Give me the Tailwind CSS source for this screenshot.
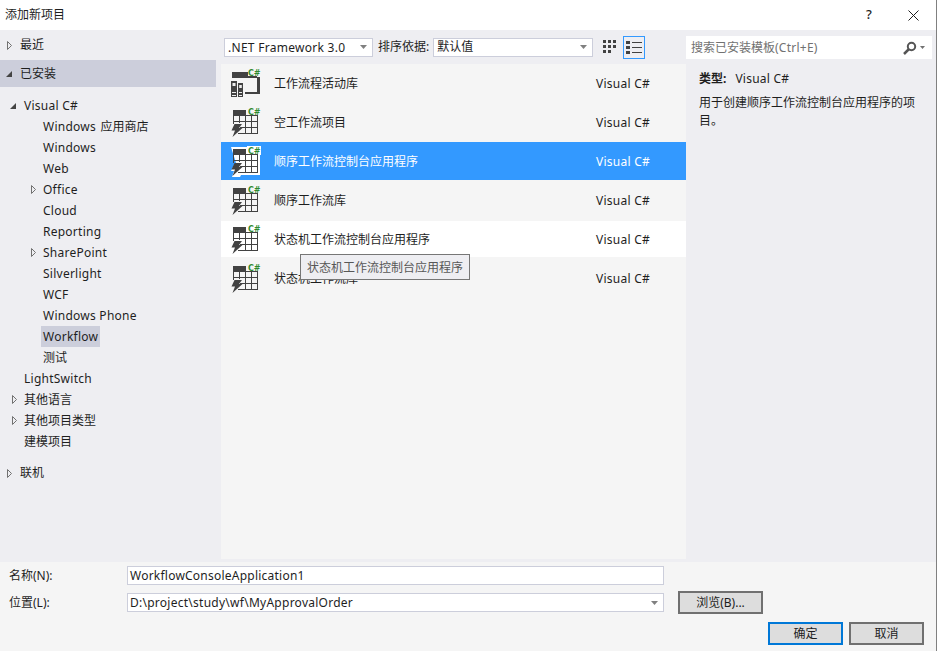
<!DOCTYPE html>
<html lang="zh">
<head>
<meta charset="utf-8">
<title>添加新项目</title>
<script src="https://cdn.jsdelivr.net/npm/@tailwindcss/browser@4"></script>
</head>
<body class="bg-white">
<svg width="0" height="0" class="absolute">
  <defs>
    <g id="tbl">
      <path d="M4 3h13v5h-13z" fill="#424242"/>
      <path d="M4.500 8v9M10.500 8v8M16.500 8v19M22.500 9v18M28.500 9v18M4 8.500h25M4 14.500h25M11 20.500h18M9 26.500h20" fill="none" stroke="#424242" stroke-width="1"/>
      <path d="M5.500 17H13l-3 4h3.500L3.500 30l2.500-6.500H2.500z" fill="#424242"/>
      <text x="19" y="7.500" font-size="8" font-weight="700" fill="#2f8a2f" font-family="DejaVu Sans" letter-spacing="-.2">C#</text>
    </g>
    <g id="tblw">
      <path d="M2 1h16v-1h14v9h-1v20h-19l-1 2h-8l2-6h-3l4-8h1z" fill="#fff"/>
    </g>
    <g id="lib">
      <path d="M3 4h16v6h-16zM19 8h9v2h-9z" fill="#424242"/>
      <path d="M28 9h3v17h-15v-2h12z" fill="#424242"/>
      <path d="M2 13h6v16h-6zM9 15h5v14h-5z" fill="#424242"/>
      <path d="M3.500 15h3v3h-3zM10.200 17h2.600v3h-2.600zM3 24h4v1h-4zM3 27h4v1h-4zM10 24h3v1h-3zM10 27h3v1h-3z" fill="#eeeeee"/>
      <text x="19" y="7.500" font-size="8" font-weight="700" fill="#2f8a2f" font-family="DejaVu Sans" letter-spacing="-.2">C#</text>
    </g>
  </defs>
</svg>
<div class="w-[938px] h-[651px] flex bg-white overflow-hidden">
<div class="w-[937px] h-[651px] flex flex-col border-r border-[#808080] text-[12px] text-[#1e1e1e] font-['Noto_Sans','Noto_Sans_CJK_SC',sans-serif]">
  <!-- title -->
  <div class="h-[30px] shrink-0 flex items-center pl-[5px] bg-white">
    <span>添加新项目</span>
    <div class="ml-auto flex items-center">
      <span class="w-[14px] text-center text-[13px] font-medium mr-[32px]">?</span>
      <svg width="11" height="11" viewBox="0 0 11 11" class="mr-[17px]"><path d="M.5.500l10 10M10.500.500l-10 10" stroke="#1e1e1e" stroke-width="1" fill="none"/></svg>
    </div>
  </div>
  <!-- middle -->
  <div class="h-[532px] shrink-0 flex bg-[#eeeef2]">
    <!-- sidebar -->
    <div class="w-[216px] shrink-0 flex flex-col pt-[5px]">
      <div class="h-[20px] flex items-center pl-[7px] gap-[8px]"><svg width="5" height="9" viewBox="0 0 5 9"><path d="M.5.500l4 4-4 4z" fill="#eeeef2" stroke="#717171"/></svg><span>最近</span></div>
      <div class="h-[27px] mt-[5px] bg-[#cccedb] flex items-center pl-[6px] gap-[8px]"><svg width="6" height="6" viewBox="0 0 6 6"><path d="M0 6l6-6v6z" fill="#444"/></svg><span>已安装</span></div>
      <div class="mt-[8px] flex flex-col">
        <div class="h-[21px] flex items-center pl-[10px] gap-[8px]"><svg width="6" height="6" viewBox="0 0 6 6"><path d="M0 6l6-6v6z" fill="#444"/></svg><span class="tracking-[0.25px]">Visual C#</span></div>
        <div class="h-[21px] flex items-center pl-[43px]"><span class="tracking-[0.25px]">Windows&nbsp;</span><span class="ml-[1px]">应用商店</span></div>
        <div class="h-[21px] flex items-center pl-[43px] tracking-[0.25px]">Windows</div>
        <div class="h-[21px] flex items-center pl-[43px] tracking-[0.25px]">Web</div>
        <div class="h-[21px] flex items-center pl-[31px] gap-[7px]"><svg width="5" height="9" viewBox="0 0 5 9"><path d="M.5.500l4 4-4 4z" fill="#eeeef2" stroke="#717171"/></svg><span class="tracking-[0.25px]">Office</span></div>
        <div class="h-[21px] flex items-center pl-[43px] tracking-[0.25px]">Cloud</div>
        <div class="h-[21px] flex items-center pl-[43px] tracking-[0.25px]">Reporting</div>
        <div class="h-[21px] flex items-center pl-[31px] gap-[7px]"><svg width="5" height="9" viewBox="0 0 5 9"><path d="M.5.500l4 4-4 4z" fill="#eeeef2" stroke="#717171"/></svg><span class="tracking-[0.25px]">SharePoint</span></div>
        <div class="h-[21px] flex items-center pl-[43px] tracking-[0.25px]">Silverlight</div>
        <div class="h-[21px] flex items-center pl-[43px] tracking-[0.25px]">WCF</div>
        <div class="h-[21px] flex items-center pl-[43px] tracking-[0.25px]">Windows Phone</div>
        <div class="h-[21px] flex items-center pl-[41px]"><span class="bg-[#cccedb] px-[2px] h-[21px] flex items-center tracking-[0.25px]">Workflow</span></div>
        <div class="h-[21px] flex items-center pl-[43px]">测试</div>
        <div class="h-[21px] flex items-center pl-[24px] tracking-[0.25px]">LightSwitch</div>
        <div class="h-[21px] flex items-center pl-[12px] gap-[7px]"><svg width="5" height="9" viewBox="0 0 5 9"><path d="M.5.500l4 4-4 4z" fill="#eeeef2" stroke="#717171"/></svg><span>其他语言</span></div>
        <div class="h-[21px] flex items-center pl-[12px] gap-[7px]"><svg width="5" height="9" viewBox="0 0 5 9"><path d="M.5.500l4 4-4 4z" fill="#eeeef2" stroke="#717171"/></svg><span>其他项目类型</span></div>
        <div class="h-[21px] flex items-center pl-[24px]">建模项目</div>
      </div>
      <div class="h-[20px] mt-[11px] flex items-center pl-[7px] gap-[8px]"><svg width="5" height="9" viewBox="0 0 5 9"><path d="M.5.500l4 4-4 4z" fill="#eeeef2" stroke="#717171"/></svg><span>联机</span></div>
    </div>
    <!-- centre -->
    <div class="w-[465px] shrink-0 ml-[5px] flex flex-col">
      <div class="h-[34px] shrink-0 flex items-center pl-[3px]">
        <div class="w-[149px] h-[19px] bg-white border border-[#cccedb] flex items-center pl-[3px] pr-[5px] justify-between"><span class="tracking-[0.28px] pt-px">.NET Framework 3.0</span><svg width="7" height="4" viewBox="0 0 7 4"><path d="M0 0h7l-3.500 4z" fill="#808080"/></svg></div>
        <span class="ml-[5px]">排序依据:</span>
        <div class="ml-[4px] w-[160px] h-[19px] bg-white border border-[#cccedb] flex items-center pl-[3px] pr-[5px] justify-between"><span>默认值</span><svg width="7" height="4" viewBox="0 0 7 4"><path d="M0 0h7l-3.500 4z" fill="#808080"/></svg></div>
        <svg width="14" height="14" viewBox="0 0 14 14" class="ml-[10px]"><path d="M0 0h3v3h-3zM5 0h3v3h-3zM10 0h3v3h-3zM0 5h3v3h-3zM5 5h3v3h-3zM10 5h3v3h-3zM0 10h3v3h-3zM5 10h3v3h-3z" fill="#424242"/></svg>
        <div class="ml-[6px] w-[22px] h-[23px] border border-[#3399ff] flex items-center justify-center"><svg width="16" height="14" viewBox="0 0 16 14"><path d="M0 1h4v3h-4zM0 6h4v3h-4zM0 11h4v3h-4z" fill="#424242"/><path d="M6 2.500h10M6 7.500h10M6 12.500h10" stroke="#424242" fill="none"/></svg></div>
      </div>
      <div class="relative h-[495px] bg-[#f5f5f5] flex flex-col">
        <div class="h-[39px] flex items-center pl-[8px] pr-[36px]"><svg width="32" height="32" viewBox="0 0 32 32"><use href="#lib"/></svg><span class="ml-[13px]">工作流程活动库</span><span class="ml-auto tracking-[0.25px]">Visual C#</span></div>
        <div class="h-[39px] flex items-center pl-[8px] pr-[36px]"><svg width="32" height="32" viewBox="0 0 32 32"><use href="#tbl"/></svg><span class="ml-[13px]">空工作流项目</span><span class="ml-auto tracking-[0.25px]">Visual C#</span></div>
        <div class="h-[38px] mb-px pt-px flex items-center pl-[8px] pr-[36px] bg-[#3399ff] text-white"><svg width="32" height="32" viewBox="0 0 32 32"><use href="#tblw"/><use href="#tbl"/></svg><span class="ml-[13px]">顺序工作流控制台应用程序</span><span class="ml-auto tracking-[0.25px]">Visual C#</span></div>
        <div class="h-[39px] flex items-center pl-[8px] pr-[36px]"><svg width="32" height="32" viewBox="0 0 32 32"><use href="#tbl"/></svg><span class="ml-[13px]">顺序工作流库</span><span class="ml-auto tracking-[0.25px]">Visual C#</span></div>
        <div class="h-[36px] mt-px mb-[2px] pt-px flex items-center pl-[8px] pr-[36px] bg-white"><svg width="32" height="32" viewBox="0 0 32 32"><use href="#tbl"/></svg><span class="ml-[13px]">状态机工作流控制台应用程序</span><span class="ml-auto tracking-[0.25px]">Visual C#</span></div>
        <div class="h-[39px] flex items-center pl-[8px] pr-[36px]"><svg width="32" height="32" viewBox="0 0 32 32"><use href="#tbl"/></svg><span class="ml-[13px]">状态机工作流库</span><span class="ml-auto tracking-[0.25px]">Visual C#</span></div>
        <div class="absolute left-[79px] top-[190px] w-[170px] h-[26px] bg-[#eeeef2] border border-[#767676] flex items-center pl-[6px] pt-px text-[#575757]">状态机工作流控制台应用程序</div>
      </div>
    </div>
    <!-- right -->
    <div class="flex-1 flex flex-col pt-[6px]">
      <div class="w-[246px] h-[23px] bg-white flex items-center pl-[5px] pr-[7px] text-[#717171]"><span>搜索已安装模板</span><span class="tracking-[0.25px]">(Ctrl+E)</span>
        <svg width="14" height="14" viewBox="0 0 14 14" class="ml-auto"><circle cx="8.500" cy="5.500" r="3.700" fill="none" stroke="#555" stroke-width="2"/><path d="M6 8l-5 5" stroke="#555" stroke-width="2.500" fill="none"/></svg>
        <svg width="5" height="3" viewBox="0 0 5 3" class="ml-[3px]"><path d="M0 0h5l-2.500 3z" fill="#717171"/></svg>
      </div>
      <div class="pl-[13px] pr-[12px] pt-[12px]">
        <div class="h-[16px] flex items-center"><span class="font-bold">类型:</span><span class="ml-[9px] tracking-[0.25px]">Visual C#</span></div>
        <div class="mt-[7px] w-[228px] leading-[18px]">用于创建顺序工作流控制台应用程序的项目。</div>
      </div>
    </div>
  </div>
  <!-- bottom -->
  <div class="h-[89px] shrink-0 bg-[#f5f5f5] pl-[9px] pt-[4px]">
    <div class="flex items-center h-[19px]"><span class="w-[118px]">名称(N):</span><div class="w-[537px] h-[19px] bg-white border border-[#cccedb] flex items-center pl-[2px] tracking-[0.23px]">WorkflowConsoleApplication1</div></div>
    <div class="flex items-center h-[23px] mt-[6px]"><span class="w-[118px]">位置(L):</span><div class="w-[537px] h-[19px] bg-white border border-[#cccedb] flex items-center pl-[2px] pr-[5px] justify-between"><span class="tracking-[0.26px]">D:\project\study\wf\MyApprovalOrder</span><svg width="7" height="4" viewBox="0 0 7 4"><path d="M0 0h7l-3.500 4z" fill="#808080"/></svg></div>
      <button class="ml-[14px] w-[85px] h-[23px] bg-[#dddddd] border-2 border-[#707070] flex items-center justify-center">浏览(B)...</button></div>
    <div class="flex justify-end gap-[6px] mt-[8px] pr-[12px]">
      <button class="w-[75px] h-[23px] bg-[#dddddd] border-2 border-[#0078d7] flex items-center justify-center">确定</button>
      <button class="w-[75px] h-[23px] bg-[#dddddd] border-2 border-[#707070] flex items-center justify-center">取消</button>
    </div>
  </div>
</div>
</div>
</body>
</html>
